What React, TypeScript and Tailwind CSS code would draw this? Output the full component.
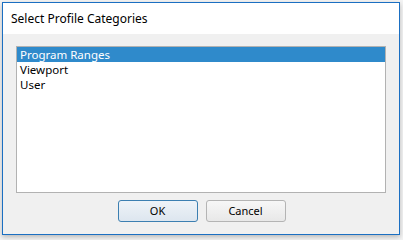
import React from "react";

export default function App() {
  const items = ["Program Ranges", "Viewport", "User"];
  return (
    <div className="w-[403px] h-[240px] bg-[#f4f4f4] overflow-hidden" style={{ fontFamily: '"Noto Sans", "Open Sans", sans-serif' }}>
      <div className="ml-[2px] mt-[2px] w-[398px] h-[233px] border border-[#1b6fc2] flex flex-col shadow-[0_2px_5px_rgba(0,0,0,0.25)]">
        <div className="h-[31px] bg-white flex items-center pl-[8px] text-[12px] text-[#000] leading-[16px]">
          Select Profile Categories
        </div>
        <div className="flex-1 bg-[#f0f0f0] flex flex-col pt-[12px] pl-[13px]">
          <div className="w-[370px] h-[147px] border border-[#b2b2b2] bg-white">
            {items.map((it, i) => (
              <div
                key={it}
                className={
                  "h-[15px] pl-[3px] text-[11.5px] leading-[15px] " +
                  (i === 0 ? "bg-[#2f8acb] text-white" : "text-black")
                }
              >
                {it}
              </div>
            ))}
          </div>
          <div className="flex justify-center gap-[8px] mt-[7px] pr-[12px]">
            <button className="w-[80px] h-[22px] rounded-[3px] border border-[#3c7fb1] bg-gradient-to-b from-[#eef3f8] to-[#dde6ef] text-[11px] text-black leading-[16px]">
              OK
            </button>
            <button className="w-[80px] h-[22px] rounded-[3px] border border-[#b4b4b4] bg-gradient-to-b from-[#f7f7f7] to-[#e8e8e8] text-[11px] text-black leading-[16px]">
              Cancel
            </button>
          </div>
        </div>
      </div>
    </div>
  );
}
